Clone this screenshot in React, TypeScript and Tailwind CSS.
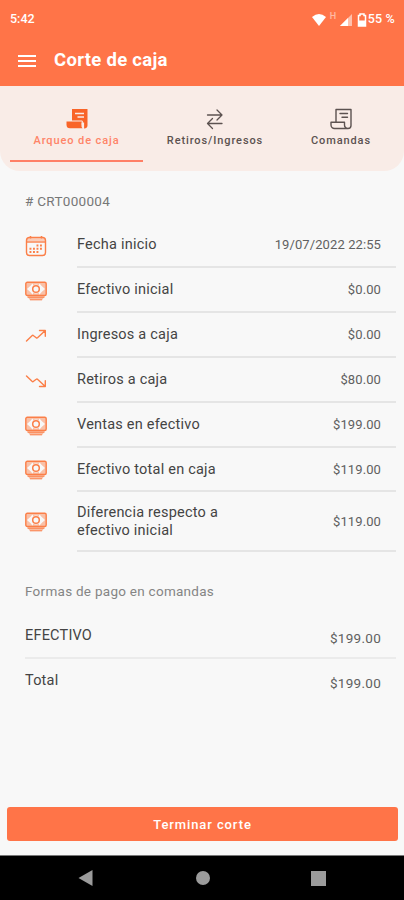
import { clsx } from "clsx";

function ReceiptIcon({ filled = false }: { filled?: boolean }) {
  if (filled) {
    return (
      <svg width="22" height="22" viewBox="0 0 22 22" fill="none">
        <path d="M6 1h15.500v16.500a3 3 0 0 1-3.400 3V14.500H6z" fill="currentColor" />
        <path d="M.5 13.500H15.500v4a3 3 0 0 0 1 2.800H4a3.500 3.500 0 0 1-3.500-3.500z" fill="currentColor" />
        <path d="M6 13H16.300v4" stroke="#f9ece7" strokeWidth="1" />
        <path d="M9 5.500h9M11.500 9H18" stroke="#f9ece7" strokeWidth="1.300" />
      </svg>
    );
  }
  return (
    <svg width="22" height="22" viewBox="0 0 22 22" fill="none" stroke="currentColor" strokeWidth="1.400" strokeLinejoin="round" strokeLinecap="round">
      <path d="M6 14V1.500h15V17.500a3 3 0 0 1-3 3H4.500a3.500 3.500 0 0 1-3.500-3.500V14.200H14.500V17a3.400 3.400 0 0 0 3.500 3.500" />
      <path d="M10 5.500h7.500M12 9.200h5.500" />
    </svg>
  );
}

function SwapIcon() {
  return (
    <svg width="18" height="22" viewBox="0 0 18 22" fill="none" stroke="currentColor" strokeWidth="1.300" strokeLinecap="round" strokeLinejoin="round">
      <path d="M11 2l5 5-5 5M16 7H1.500M6.500 10.500l-5 5 5 5M1.500 15.500H16" />
    </svg>
  );
}

function CalendarIcon() {
  return (
    <svg width="22" height="22" viewBox="0 0 22 22" fill="none" stroke="currentColor">
      <rect x="1.500" y="2.500" width="19" height="18" rx="3" strokeWidth="1.400" />
      <path d="M1.500 7h19" strokeWidth="1.400" />
      <path d="M2 4.700h18" strokeWidth="3" opacity=".35" />
      <path d="M5.500 1v2.500M16.500 1v2.500" strokeWidth="1.500" />
      <path d="M11.500 10.500h7M4.500 13.700h13M4.500 17h9.500" strokeWidth="1.900" strokeDasharray="1.900 1.600" />
    </svg>
  );
}

function CashIcon() {
  return (
    <svg width="22" height="20" viewBox="0 0 22 20" fill="none" stroke="currentColor">
      <rect x=".8" y="1.300" width="20.400" height="13.200" rx="1.500" fill="currentColor" fillOpacity=".45" strokeWidth="1.400" />
      <path d="M7.500 3.300Q5.500 6 2.800 8q2.700 2 4.700 4.700zM14.500 3.300q2 2.700 4.700 4.700-2.700 2-4.700 4.700z" fill="#f8f8f8" stroke="#f8f8f8" strokeWidth="1.200" strokeLinejoin="round" />
      <circle cx="11" cy="8" r="4.600" fill="#f8f8f8" stroke="none" />
      <circle cx="11" cy="8" r="3.300" strokeWidth="1.500" />
      <path d="M1.800 14.500h18.400l-3.200 4.800H5z" fill="currentColor" fillOpacity=".5" stroke="none" />
      <path d="M2.500 16.400h17" strokeWidth="1.200" opacity=".7" />
      <path d="M5 18.700h12" strokeWidth="1.200" opacity=".7" />
    </svg>
  );
}

function TrendIcon({ down = false }: { down?: boolean }) {
  return (
    <svg
      className={clsx(down && "-scale-y-100")}
      width="22"
      height="14"
      viewBox="0 0 22 14"
      fill="none"
      stroke="currentColor"
      strokeWidth="1.400"
      strokeLinecap="round"
      strokeLinejoin="round"
    >
      <path d="M1.500 12L7 6.700q.8-.7 1.600 0l2.600 2q.8.700 1.600-.1L20 1.800M14.500 1.500H20.300V7.200" />
    </svg>
  );
}

function StatusBar() {
  return (
    <div className="flex h-[39px] items-center justify-between pl-2.5 pr-[9px] text-[12.500px] font-medium">
      <span>5:42</span>
      <div className="flex items-center">
        <svg width="16" height="14" viewBox="0 0 16 14" fill="currentColor">
          <path d="M1 4Q8-2 15 4L8 13z" />
        </svg>
        <span className="mb-1.5 ml-[3px] w-2 text-[9px] leading-none opacity-50">H</span>
        <svg className="ml-px" width="14" height="14" viewBox="0 0 14 14">
          <path d="M13 1v12H1z" fill="currentColor" opacity=".55" />
          <path d="M9 5v8H1z" fill="currentColor" />
        </svg>
        <svg className="ml-1" width="10" height="14" viewBox="0 0 10 14">
          <path d="M3 1h4v1.500h1.500V13h-7V2.500H3z" fill="none" stroke="currentColor" strokeWidth="1.500" />
          <path d="M2 7.500h6V13H2z" fill="currentColor" />
        </svg>
        <span className="ml-px tracking-[0.2px]">55 %</span>
      </div>
    </div>
  );
}

export default function App() {
  const tabs = [
    { label: "Arqueo de caja", icon: <ReceiptIcon filled />, width: "w-[133px]", active: true },
    { label: "Retiros/Ingresos", icon: <SwapIcon />, width: "w-[144px]", active: false },
    { label: "Comandas", icon: <ReceiptIcon />, width: "w-[108px]", active: false },
  ];

  const rows = [
    { icon: <CalendarIcon />, label: "Fecha inicio", value: "19/07/2022 22:55", height: "h-[45px]" },
    { icon: <CashIcon />, label: "Efectivo inicial", value: "$0.00", height: "h-[45px]" },
    { icon: <TrendIcon />, label: "Ingresos a caja", value: "$0.00", height: "h-[45px]" },
    { icon: <TrendIcon down />, label: "Retiros a caja", value: "$80.00", height: "h-[45px]" },
    { icon: <CashIcon />, label: "Ventas en efectivo", value: "$199.00", height: "h-[45px]" },
    { icon: <CashIcon />, label: "Efectivo total en caja", value: "$119.00", height: "h-11" },
    { icon: <CashIcon />, label: "Diferencia respecto a efectivo inicial", value: "$119.00", height: "h-[60px]" },
  ];

  return (
    <div className="flex h-[900px] w-[404px] flex-col overflow-hidden bg-[#f8f8f8] font-[Roboto,sans-serif] text-[#444]">
      {/* Header */}
      <header className="h-[86px] shrink-0 bg-[#ff7448] text-white">
        <StatusBar />
        <div className="flex h-11 items-center pl-[18px]">
          <div className="flex w-[18px] flex-col gap-[3px]">
            <div className="h-0.5 bg-white" />
            <div className="h-0.5 bg-white" />
            <div className="h-0.5 bg-white" />
          </div>
          <h1 className="ml-[18px] text-[18.500px] font-bold tracking-[0.3px]">Corte de caja</h1>
        </div>
      </header>

      {/* Tabs */}
      <nav className="flex h-[85px] shrink-0 rounded-b-[20px] bg-[#f9ece7] px-2.5">
        {tabs.map((tab) => (
          <div
            key={tab.label}
            className={clsx(
              "flex h-[76px] shrink-0 flex-col items-center border-b-2 pt-[22px]",
              tab.width,
              tab.active ? "border-[#ff7f66] text-[#f96428]" : "border-transparent text-[#5c5250]"
            )}
          >
            {tab.icon}
            <span className={clsx("mt-1 text-[11px] leading-[14px] font-medium tracking-[0.9px] whitespace-nowrap", tab.active && "text-[#ff8468]")}>
              {tab.label}
            </span>
          </div>
        ))}
      </nav>

      <main className="flex-1">
        <p className="pt-5 pl-[25px] text-[13.500px] leading-5 tracking-[0.3px] text-[#777]"># CRT000004</p>

        {/* Cash summary */}
        <ul className="mt-3">
          {rows.map((row) => (
            <li key={row.label} className={clsx("flex pr-2 pl-[25px]", row.height)}>
              <div className="flex w-[52px] items-center text-[#fb7f48]">{row.icon}</div>
              <div className="flex flex-1 items-center justify-between border-b-2 border-[#e5e5e5] pt-px pr-[15px]">
                <span className="w-[160px] text-[14.500px] leading-[18px] tracking-[0.22px]">{row.label}</span>
                <span className="text-[13px] tracking-[0.1px] whitespace-nowrap text-[#606060]">{row.value}</span>
              </div>
            </li>
          ))}
        </ul>

        {/* Payment methods */}
        <h2 className="mt-[29px] pl-[25px] text-[13.500px] leading-5 tracking-[0.27px] text-[#858585]">Formas de pago en comandas</h2>
        <div className="mt-3 mr-2 ml-[25px]">
          <div className="flex h-[46px] justify-between border-b-2 border-[#ebebeb] pt-[13px] pr-[15px]">
            <span className="text-[14.500px] leading-5 tracking-[0.2px]">EFECTIVO</span>
            <span className="pt-0.5 text-[13.500px] leading-5 tracking-[0.27px] text-[#606060]">$199.00</span>
          </div>
          <div className="flex h-[46px] justify-between pt-3 pr-[15px]">
            <span className="text-[14.500px] leading-5 tracking-[0.2px]">Total</span>
            <span className="pt-0.5 text-[13.500px] leading-5 tracking-[0.27px] text-[#606060]">$199.00</span>
          </div>
        </div>
      </main>

      <div className="pr-[6px] pb-3.5 pl-[7px]">
        <button className="block h-[34px] w-full rounded-[3px] bg-[#ff7448] pt-0.5 text-[13px] font-medium tracking-[0.9px] text-white">
          Terminar corte
        </button>
      </div>

      {/* Android navigation bar */}
      <footer className="flex h-[45px] shrink-0 items-center justify-between border-t border-[#777] bg-black pr-[78px] pl-[78px] text-[#9b9b9b]">
        <svg width="16" height="16" viewBox="0 0 16 16" fill="currentColor">
          <path d="M.500 8L14.500 0v16z" />
        </svg>
        <div className="h-3.5 w-3.5 rounded-full bg-[#9b9b9b]" />
        <div className="h-[15px] w-[15px] bg-[#9b9b9b]" />
      </footer>
    </div>
  );
}
